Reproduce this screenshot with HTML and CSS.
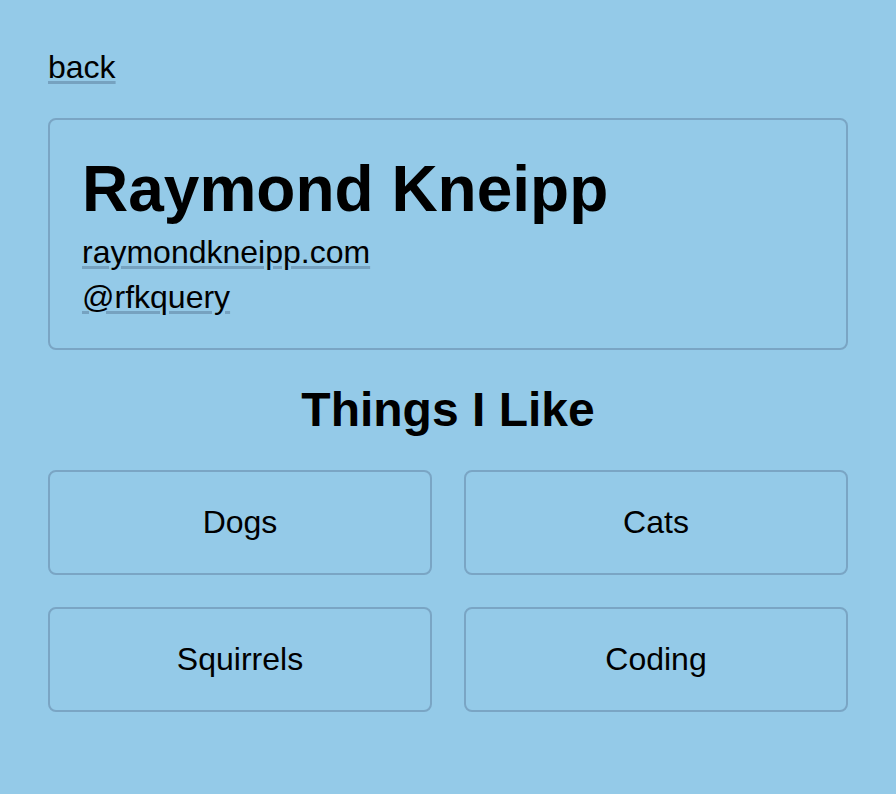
FILE: index.html
```html
<!DOCTYPE html>
<html>
<head>
<meta charset="utf-8">
<link rel="stylesheet" href="styles.css">
</head>
<body>
<main class="page">
  <div class="nav"><a class="link" href="#">back</a></div>
  <section class="card">
    <h1 class="name">Raymond Kneipp</h1>
    <a class="link" href="#">raymondkneipp.com</a>
    <a class="link" href="#">@rfkquery</a>
  </section>
  <h2 class="title">Things I Like</h2>
  <ul class="likes">
    <li class="like">Dogs</li>
    <li class="like">Cats</li>
    <li class="like">Squirrels</li>
    <li class="like">Coding</li>
  </ul>
</main>
</body>
</html>
```
FILE: styles.css
```css
html, body {
  margin: 0;
  padding: 0;
  background: #94cae8;
}
body {
  font-family: "Liberation Sans", Arial, sans-serif;
  font-size: 32px;
  color: #000;
}
.page {
  padding: 49px 48px 48px;
  display: flex;
  flex-direction: column;
  gap: 32px;
}
.nav {
  display: flex;
}
.link {
  color: #000;
  text-decoration: underline;
  text-decoration-color: #76a2c0;
  text-decoration-thickness: 3px;
  text-underline-offset: 3px;
}
.card {
  border: 2px solid #7aa5c4;
  border-radius: 8px;
  padding: 32px;
  display: flex;
  flex-direction: column;
  align-items: flex-start;
  gap: 8px;
}
.name {
  margin: 0;
  font-size: 64px;
  font-weight: bold;
}
.title {
  margin: 0;
  padding-bottom: 1px;
  font-size: 48px;
  font-weight: bold;
  text-align: center;
}
.likes {
  list-style: none;
  margin: 0;
  padding: 0;
  display: grid;
  grid-template-columns: 1fr 1fr;
  gap: 32px;
}
.like {
  border: 2px solid #7aa5c4;
  border-radius: 8px;
  padding: 32px;
  text-align: center;
}
```
